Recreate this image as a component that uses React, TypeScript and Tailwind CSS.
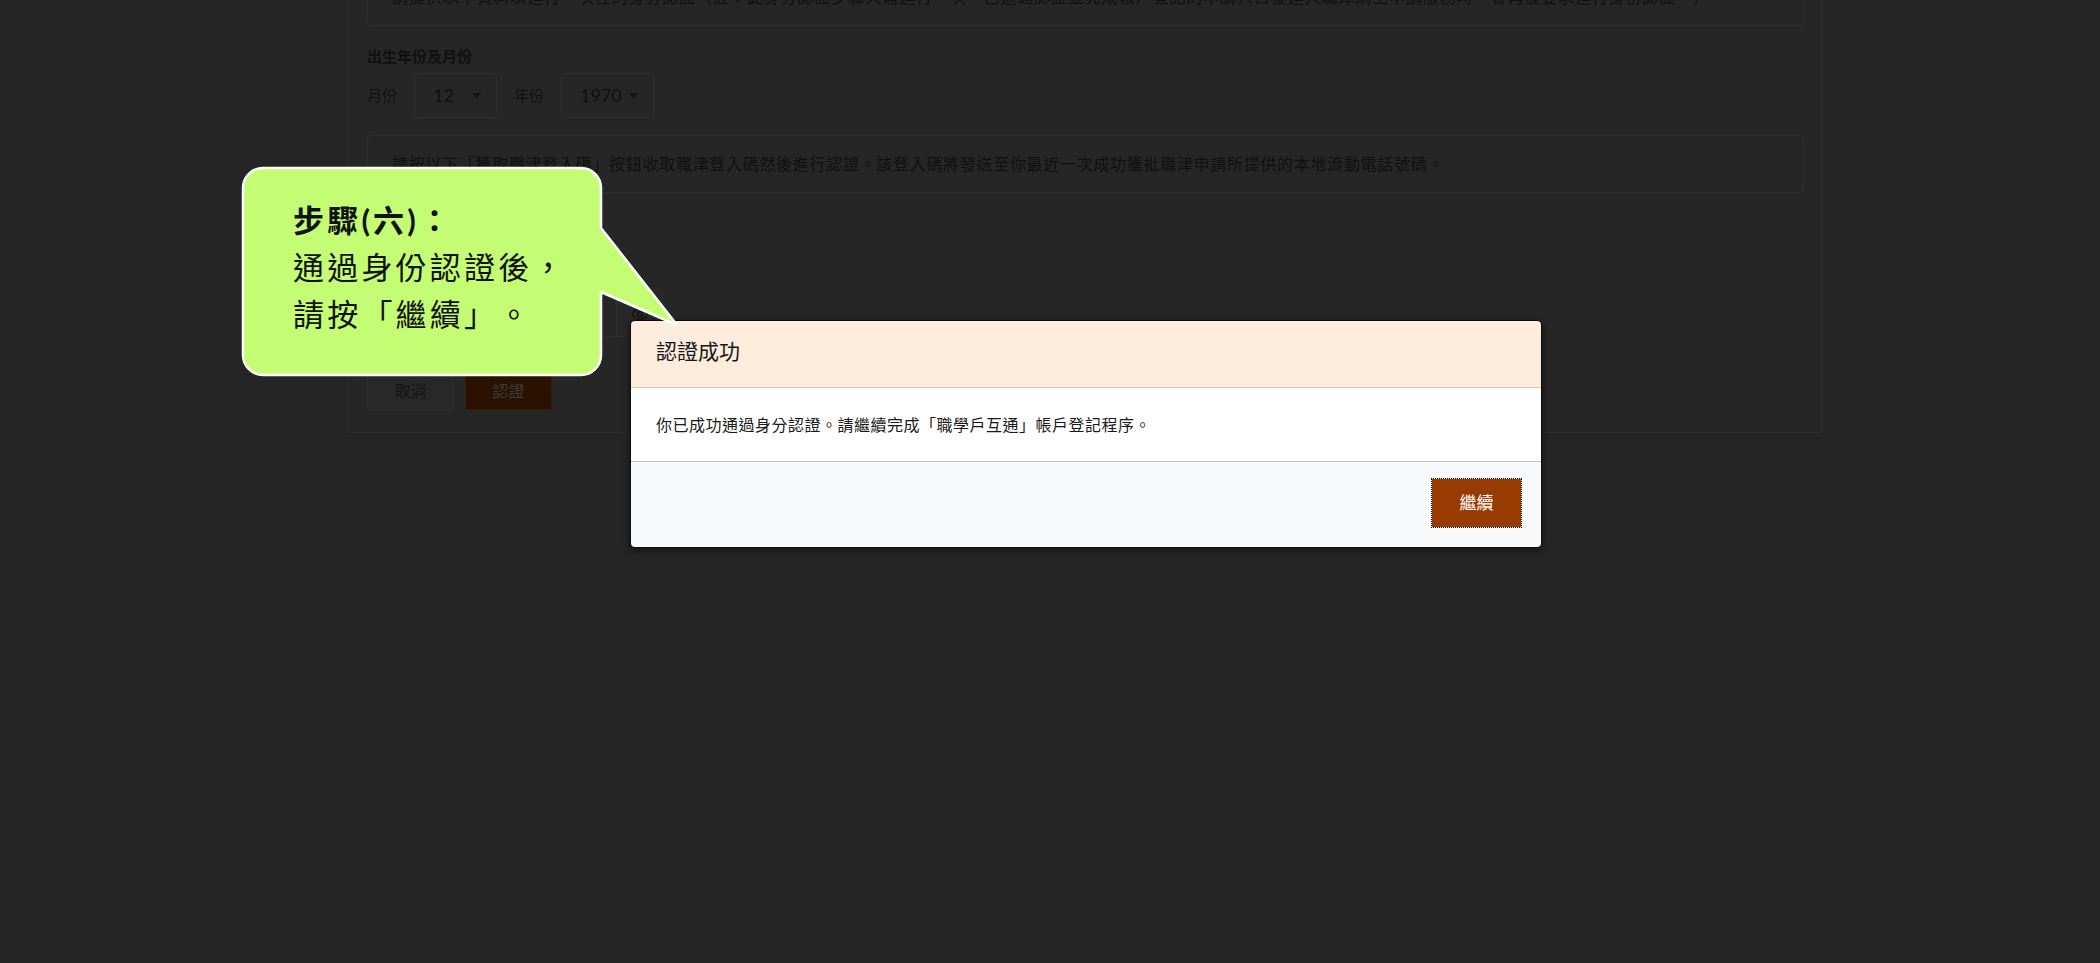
import React from "react";
import { Eye } from "lucide-react";

const FONT = 'Lato, "Noto Sans CJK TC", "Noto Sans", sans-serif';

function Caret() {
  return (
    <svg width="9" height="6" viewBox="0 0 9 6" className="ml-auto">
      <path d="M0 0 H9 L4.5 5.5 Z" fill="#141414" />
    </svg>
  );
}

function Callout() {
  return (
    <>
      <svg
        className="absolute left-[240px] top-[165px]"
        width="442"
        height="214"
        viewBox="0 0 442 214"
      >
        <path
          d="M23 3 H341 A20 20 0 0 1 361 23 V63 L437 160 L361 127 V190 A20 20 0 0 1 341 210 H23 A20 20 0 0 1 3 190 V23 A20 20 0 0 1 23 3 Z"
          fill="#c4fd73"
          stroke="#ffffff"
          strokeWidth="2.5"
          strokeLinejoin="round"
        />
      </svg>
      <div className="absolute left-[293px] top-[197px] text-[31px] leading-[47px] tracking-[3.2px] text-[#111] [text-spacing-trim:space-all]">
        <div className="font-bold">步驟(六)：</div>
        <div>通過身份認證後，</div>
        <div>請按「繼續」。</div>
      </div>
    </>
  );
}

function Modal() {
  return (
    <div className="absolute left-[630px] top-[320px] w-[912px] overflow-hidden rounded-[5px] border border-[#0c0c0c] shadow-[0_2px_6px_rgba(0,0,0,0.6)] [text-spacing-trim:space-all]">
      <div className="flex h-[67px] items-center border-b border-[#d2c8be] bg-[#feecdc] px-[25px] pb-[6px]">
        <span className="text-[21px] text-[#161616]">認證成功</span>
      </div>
      <div className="flex h-[74px] items-center border-b border-[#bdbdbd] bg-white px-[25px]">
        <span className="text-[16px] tracking-[0.5px] text-[#1a1a1a]">
          你已成功通過身分認證。請繼續完成「職學戶互通」帳戶登記程序。
        </span>
      </div>
      <div className="flex h-[85px] items-start justify-end bg-[#f8f9fa] pr-[20px] pt-[17px]">
        <button className="h-[48px] w-[89px] bg-[#983b02] text-[17px] text-white outline-1 outline-dotted outline-black">
          繼續
        </button>
      </div>
    </div>
  );
}

export default function App() {
  return (
    <div
      className="relative h-[963px] w-[2100px] overflow-hidden bg-[#252525]"
      style={{ fontFamily: FONT }}
    >
      <div className="-mt-[32px] ml-[348px] w-[1474px] border-x border-b border-[#2d2d2d] bg-[#262626] pb-[22px] pl-[18px] pr-[17px] text-[#101010] [text-spacing-trim:space-all]">
        <div className="h-[58px] rounded border border-[#283030] px-[24px] py-[16px] text-[16px] leading-[24px] tracking-[0.9px]">
          請提供以下資料以進行一次性的身分認證（註：此身分認證步驟只需進行一次，已通過認證並完成帳戶登記的申請人日後進入職津網上申請服務時，會再被要求進行身份認證。）
        </div>

        <div className="mt-[20px] text-[15px] font-bold leading-[20px]">出生年份及月份</div>

        <div className="mt-[7px] flex h-[45px] items-center gap-[17px] text-[15px]">
          <span>月份</span>
          <div className="flex h-[45px] w-[83px] items-center rounded border border-[#2e2e2e] pl-[18px] pr-[15px] text-[18px]">
            <span>12</span>
            <Caret />
          </div>
          <span>年份</span>
          <div className="flex h-[45px] w-[93px] items-center rounded border border-[#2e2e2e] pl-[18px] pr-[15px] text-[18px]">
            <span>1970</span>
            <Caret />
          </div>
        </div>

        <div className="mt-[17px] flex h-[58px] items-center rounded border border-[#283030] px-[24px] text-[16px] tracking-[0.7px]">
          請按以下「獲取職津登入碼」按鈕收取職津登入碼然後進行認證。該登入碼將發送至你最近一次成功獲批職津申請所提供的本地流動電話號碼。
        </div>

        <button className="mt-[17px] h-[45px] rounded bg-[#2a1100] px-[16px] text-[16px] text-[#3a3a3a]">
          獲取職津登入碼
        </button>

        <div className="mt-[35px] flex h-[47px] w-[296px]">
          <div className="flex-1 rounded-l border border-[#2e2e2e]" />
          <div className="flex w-[46px] items-center justify-center rounded-r border border-l-0 border-[#2e2e2e] bg-[#282828]">
            <Eye size={18} color="#151515" />
          </div>
        </div>

        <div className="mt-[35px] flex gap-[11px]">
          <button className="h-[38px] w-[87px] rounded-[3px] border border-[#2e2e2e] bg-[#282828] text-[16px] text-[#151515]">
            取消
          </button>
          <button className="h-[38px] w-[87px] rounded-[3px] border border-[#3a1a05] bg-[#2a1100] text-[16px] text-[#3c3c3c]">
            認證
          </button>
        </div>
      </div>

      <Modal />
      <Callout />
    </div>
  );
}
